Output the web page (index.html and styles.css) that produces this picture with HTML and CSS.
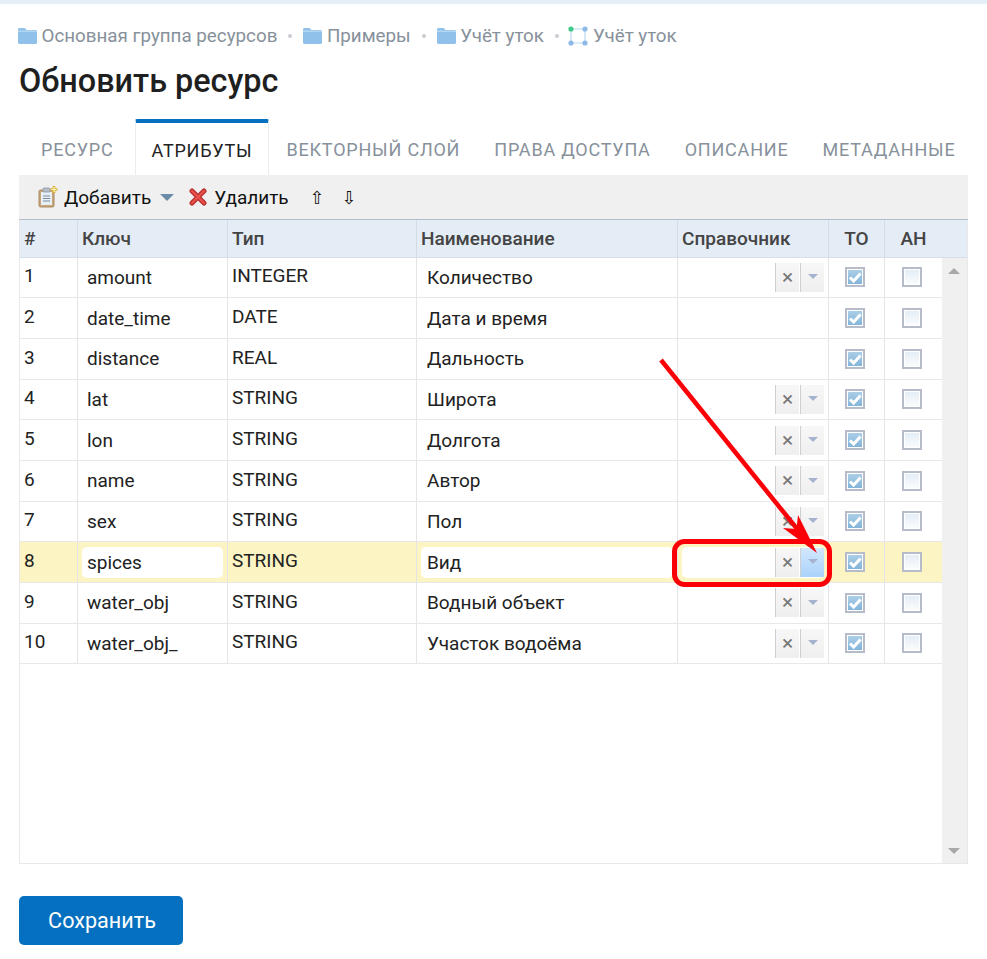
FILE: index.html
```html
<!DOCTYPE html>
<html lang="ru">
<head>
  <meta charset="UTF-8" />
  <meta name="viewport" content="width=device-width, initial-scale=1.0"/>
  <title>Обновить ресурс</title>
  <link rel="stylesheet" href="styles.css">
</head>
<body>

  <svg class="defs" width="0" height="0">
    <symbol id="folder" viewBox="0 0 19 16">
      <path d="M0 1.5C0 .7.6 0 1.4 0h4.8c.6 0 1 .3 1.3.8L8.4 2h9.2c.8 0 1.4.6 1.4 1.4v11.2c0 .8-.6 1.4-1.4 1.4H1.4C.6 16 0 15.4 0 14.6z" fill="#8fc1ea"/>
      <path d="M0 3.2h19" stroke="#c4e0f5" stroke-width="1"/>
    </symbol>
    <symbol id="check" viewBox="0 0 20 20">
      <path d="M5 10.5l3.6 3.6L15.5 6.5" fill="none" stroke="#fff" stroke-width="3"/>
    </symbol>
  </svg>

  <div class="topbar"></div>

  <div class="page">
    <nav class="crumbs">
      <svg class="crumb-icon"><use href="#folder"/></svg>
      <span>Основная группа ресурсов</span>
      <span class="dot"></span>
      <svg class="crumb-icon"><use href="#folder"/></svg>
      <span>Примеры</span>
      <span class="dot"></span>
      <svg class="crumb-icon"><use href="#folder"/></svg>
      <span>Учёт уток</span>
      <span class="dot dot-last"></span>
      <svg class="layer-icon" viewBox="0 0 20 20">
        <path d="M3 3h14v14H3z" fill="none" stroke="#bcd7f0" stroke-width="1.2"/>
        <circle cx="3" cy="3" r="2.6" fill="#3ecb8a"/>
        <circle cx="17" cy="3" r="2.6" fill="#8db9e6"/>
        <circle cx="3" cy="17" r="2.6" fill="#8db9e6"/>
        <circle cx="17" cy="17" r="2.6" fill="#8db9e6"/>
      </svg>
      <span>Учёт уток</span>
    </nav>

    <h1>Обновить ресурс</h1>

    <div class="tabs">
      <div class="tab">Ресурс</div>
      <div class="tab tab-active">Атрибуты</div>
      <div class="tab">Векторный слой</div>
      <div class="tab">Права доступа</div>
      <div class="tab">Описание</div>
      <div class="tab">Метаданные</div>
    </div>

    <div class="grid">
      <div class="toolbar">
        <svg class="tool-icon add-icon" viewBox="0 0 20 22">
          <rect x="1" y="4" width="15" height="17" rx="1.5" fill="#c9a77c" stroke="#a98a62"/>
          <rect x="3" y="6" width="11" height="13" fill="#e6eef6"/>
          <path d="M5 10h7M5 12.5h7M5 15h7" stroke="#7d8c9c" stroke-width="1.2"/>
          <rect x="5" y="2" width="7" height="4" rx="1" fill="#b6bec8" stroke="#8c96a2" stroke-width=".8"/>
          <path d="M16 0v7M12.5 3.5h7" stroke="#d9b13a" stroke-width="2.6"/>
          <path d="M16 1v5M13.5 3.5h5" stroke="#fff2a8" stroke-width="1.2"/>
        </svg>
        <span class="tool-label">Добавить</span>
        <span class="tool-caret"></span>
        <svg class="tool-icon del-icon" viewBox="0 0 18 18">
          <path d="M3 3l12 12M15 3L3 15" stroke="#b9302f" stroke-width="5" stroke-linecap="round"/>
          <path d="M3 3l12 12M15 3L3 15" stroke="#e8504a" stroke-width="2.4" stroke-linecap="round"/>
        </svg>
        <span class="tool-label">Удалить</span>
        <span class="tool-arrow tool-arrow-up">⇧</span>
        <span class="tool-arrow">⇩</span>
      </div>

      <div class="head">
        <div class="col-num">#</div>
        <div class="col-key">Ключ</div>
        <div class="col-type">Тип</div>
        <div class="col-name">Наименование</div>
        <div class="col-ref">Справочник</div>
        <div class="col-to">ТО</div>
        <div class="col-an">АН</div>
      </div>

      <div class="body">
        <div class="rows">
          <div class="row">
            <div class="col-num">1</div>
            <div class="col-key"><div class="field">amount</div></div>
            <div class="col-type">INTEGER</div>
            <div class="col-name"><div class="field">Количество</div></div>
            <div class="col-ref"><div class="field ref-field"><span class="ref-btn">×</span><span class="ref-btn ref-open"></span></div></div>
            <div class="col-to"><span class="box box-on"><svg><use href="#check"/></svg></span></div>
            <div class="col-an"><span class="box"></span></div>
          </div>
          <div class="row">
            <div class="col-num">2</div>
            <div class="col-key"><div class="field">date_time</div></div>
            <div class="col-type">DATE</div>
            <div class="col-name"><div class="field">Дата и время</div></div>
            <div class="col-ref"></div>
            <div class="col-to"><span class="box box-on"><svg><use href="#check"/></svg></span></div>
            <div class="col-an"><span class="box"></span></div>
          </div>
          <div class="row">
            <div class="col-num">3</div>
            <div class="col-key"><div class="field">distance</div></div>
            <div class="col-type">REAL</div>
            <div class="col-name"><div class="field">Дальность</div></div>
            <div class="col-ref"></div>
            <div class="col-to"><span class="box box-on"><svg><use href="#check"/></svg></span></div>
            <div class="col-an"><span class="box"></span></div>
          </div>
          <div class="row">
            <div class="col-num">4</div>
            <div class="col-key"><div class="field">lat</div></div>
            <div class="col-type">STRING</div>
            <div class="col-name"><div class="field">Широта</div></div>
            <div class="col-ref"><div class="field ref-field"><span class="ref-btn">×</span><span class="ref-btn ref-open"></span></div></div>
            <div class="col-to"><span class="box box-on"><svg><use href="#check"/></svg></span></div>
            <div class="col-an"><span class="box"></span></div>
          </div>
          <div class="row">
            <div class="col-num">5</div>
            <div class="col-key"><div class="field">lon</div></div>
            <div class="col-type">STRING</div>
            <div class="col-name"><div class="field">Долгота</div></div>
            <div class="col-ref"><div class="field ref-field"><span class="ref-btn">×</span><span class="ref-btn ref-open"></span></div></div>
            <div class="col-to"><span class="box box-on"><svg><use href="#check"/></svg></span></div>
            <div class="col-an"><span class="box"></span></div>
          </div>
          <div class="row">
            <div class="col-num">6</div>
            <div class="col-key"><div class="field">name</div></div>
            <div class="col-type">STRING</div>
            <div class="col-name"><div class="field">Автор</div></div>
            <div class="col-ref"><div class="field ref-field"><span class="ref-btn">×</span><span class="ref-btn ref-open"></span></div></div>
            <div class="col-to"><span class="box box-on"><svg><use href="#check"/></svg></span></div>
            <div class="col-an"><span class="box"></span></div>
          </div>
          <div class="row">
            <div class="col-num">7</div>
            <div class="col-key"><div class="field">sex</div></div>
            <div class="col-type">STRING</div>
            <div class="col-name"><div class="field">Пол</div></div>
            <div class="col-ref"><div class="field ref-field"><span class="ref-btn">×</span><span class="ref-btn ref-open"></span></div></div>
            <div class="col-to"><span class="box box-on"><svg><use href="#check"/></svg></span></div>
            <div class="col-an"><span class="box"></span></div>
          </div>
          <div class="row row-selected">
            <div class="col-num">8</div>
            <div class="col-key"><div class="field">spices</div></div>
            <div class="col-type">STRING</div>
            <div class="col-name"><div class="field">Вид</div></div>
            <div class="col-ref"><div class="field ref-field"><span class="ref-btn">×</span><span class="ref-btn ref-open ref-hover"></span></div></div>
            <div class="col-to"><span class="box box-on"><svg><use href="#check"/></svg></span></div>
            <div class="col-an"><span class="box"></span></div>
          </div>
          <div class="row">
            <div class="col-num">9</div>
            <div class="col-key"><div class="field">water_obj</div></div>
            <div class="col-type">STRING</div>
            <div class="col-name"><div class="field">Водный объект</div></div>
            <div class="col-ref"><div class="field ref-field"><span class="ref-btn">×</span><span class="ref-btn ref-open"></span></div></div>
            <div class="col-to"><span class="box box-on"><svg><use href="#check"/></svg></span></div>
            <div class="col-an"><span class="box"></span></div>
          </div>
          <div class="row">
            <div class="col-num">10</div>
            <div class="col-key"><div class="field">water_obj_</div></div>
            <div class="col-type">STRING</div>
            <div class="col-name"><div class="field">Участок водоёма</div></div>
            <div class="col-ref"><div class="field ref-field"><span class="ref-btn">×</span><span class="ref-btn ref-open"></span></div></div>
            <div class="col-to"><span class="box box-on"><svg><use href="#check"/></svg></span></div>
            <div class="col-an"><span class="box"></span></div>
          </div>
        </div>
        <div class="scrollbar">
          <span class="scroll-up"></span>
          <span class="scroll-down"></span>
        </div>
      </div>
    </div>

    <button class="save">Сохранить</button>
  </div>

  <!-- red marks drawn on top of the screenshot -->
  <svg class="marks" viewBox="0 0 987 959">
    <rect x="674.5" y="541.5" width="155" height="43" rx="10" fill="none" stroke="#fb0007" stroke-width="5"/>
    <path d="M661 360L802 535" stroke="#fb0007" stroke-width="4.5" fill="none"/>
    <path d="M817 553L783 528L796.500 529L798 515z" fill="#fb0007"/>
  </svg>

</body>
</html>
```

FILE: styles.css
```css
* {
  box-sizing: border-box;
}

body {
  font-family: Roboto, sans-serif;
  background: #fff;
  color: #1c1c1c;
  margin: 0;
  position: relative;
}

.defs {
  position: absolute;
}

.topbar {
  height: 4px;
  background: #e5eff7;
}

.page {
  padding: 0 19px;
}

/* breadcrumbs */
.crumbs {
  display: flex;
  align-items: center;
  height: 24px;
  margin-top: 20px;
  margin-left: -1px;
  font-size: 18.8px;
  color: #87919b;
}

.crumb-icon {
  width: 19px;
  height: 16px;
  margin-right: 4.5px;
  flex: none;
}

.layer-icon {
  width: 20px;
  height: 20px;
  margin-right: 5px;
  flex: none;
}

.dot {
  width: 4px;
  height: 4px;
  border-radius: 50%;
  background: #c9cdd2;
  margin: 0 11px;
}

.dot-last {
  margin-right: 9px;
}

h1 {
  font-size: 32.4px;
  font-weight: 500;
  line-height: 36px;
  color: #1f1f1f;
  margin: 15px 0 20px;
}

/* tabs */
.tabs {
  display: flex;
  height: 56px;
  padding-left: 5px;
  white-space: nowrap;
}

.tab {
  padding: 21px 17px 0;
  font-size: 18px;
  line-height: 20px;
  letter-spacing: 0.8px;
  text-transform: uppercase;
  color: #87919b;
}

.tab:first-child {
  margin-right: 4px;
}

.tab-active {
  color: #222;
  padding: 18px 16px 0;
  border: 1px solid #e8edf2;
  border-top: 4px solid #0670c0;
  border-bottom: none;
  border-radius: 2px 2px 0 0;
  background: #fff;
}

/* attribute grid */
.grid {
  border: 1px solid #e8e8e8;
  border-top: none;
  height: 689px;
}

.toolbar {
  display: flex;
  align-items: center;
  height: 45px;
  margin-left: -1px;
  margin-right: -1px;
  background: #f0f0f0;
  border-bottom: 1px solid #b3bbc6;
  font-size: 19px;
  color: #111;
  padding-left: 19px;
}

.tool-icon {
  flex: none;
}

.add-icon {
  width: 20px;
  height: 22px;
  margin-right: 6px;
}

.del-icon {
  width: 18px;
  height: 18px;
  margin-right: 7px;
}

.tool-caret {
  width: 0;
  height: 0;
  border-left: 7px solid transparent;
  border-right: 7px solid transparent;
  border-top: 7px solid #6c8ba9;
  margin: 0 15px 0 9px;
}

.tool-arrow {
  font-family: "DejaVu Sans", sans-serif;
  font-size: 18px;
  width: 14px;
  margin-left: 18px;
  text-align: center;
}

.tool-arrow-up {
  margin-left: 21px;
}

.head,
.row {
  display: grid;
  grid-template-columns: 58px 150px 189px 261px 151px 56px 57px;
}

.head {
  height: 37.67px;
  background: #e4ecf6;
  font-size: 19px;
  font-weight: 500;
  color: #444;
  border-bottom: 1px solid #d6dee8;
}

.head > div {
  display: flex;
  align-items: center;
  padding-left: 4px;
  border-right: 1px solid #d3dbe6;
}

.head .col-to,
.head .col-an {
  justify-content: center;
  padding-left: 0;
}

.head .col-an {
  border-right: none;
}

.body {
  display: flex;
  height: 605.33px;
}

.rows {
  flex: 1;
}

.row {
  height: 40.67px;
  border-bottom: 1px solid #e8e8e8;
  font-size: 19px;
  color: #222;
}

.row > div {
  display: flex;
  align-items: center;
  border-right: 1px solid #e4e4e4;
}

.row .col-an {
  border-right: none;
}

.row .col-num,
.row .col-type {
  padding: 0 0 3px 4px;
}

.row .col-to,
.row .col-an {
  justify-content: center;
  padding: 0 4px 0 0;
}

.row .col-key,
.row .col-name {
  padding: 0 4px;
}

.row .col-ref {
  padding: 0 4px;
}

.field {
  flex: 1;
  display: flex;
  align-items: center;
  height: 31px;
  padding-left: 5px;
  border-radius: 5px;
}

.col-name .field {
  padding-left: 6px;
}

.row-selected {
  background: #fcf5c3;
}

.row-selected .field {
  background: #fff;
}

.ref-field {
  justify-content: flex-end;
  gap: 1px;
  padding: 0;
}

.ref-btn {
  width: 24px;
  height: 29px;
  display: flex;
  align-items: center;
  justify-content: center;
  border-left: 1px solid #cfcfcf;
  background: linear-gradient(#f7f7f7, #efefef);
  font-size: 21px;
  color: #777;
  padding-bottom: 1px;
}

.ref-open::after {
  content: "";
  border-left: 5px solid transparent;
  border-right: 5px solid transparent;
  border-top: 5px solid #a6b3d0;
}

.ref-hover {
  background: linear-gradient(#d2e7fc, #aad2fb);
}

/* checkboxes */
.box {
  width: 20px;
  height: 20px;
  display: block;
  border: 2px solid #b6bcca;
  background: linear-gradient(#e3edf6, #fbfdfe);
  box-shadow: inset 0 0 0 1px #fff;
}

.box-on {
  background: linear-gradient(#aed0e8, #7fb2d8);
}

.box svg {
  display: block;
  width: 20px;
  height: 20px;
  margin: -2px;
}

/* fake scrollbar */
.scrollbar {
  width: 25px;
  background: #f0f0f0;
  position: relative;
}

.scroll-up,
.scroll-down {
  position: absolute;
  left: 6px;
  border-left: 6px solid transparent;
  border-right: 6px solid transparent;
}

.scroll-up {
  top: 10px;
  border-bottom: 6px solid #a8a8a8;
}

.scroll-down {
  bottom: 9px;
  border-top: 6px solid #a8a8a8;
}

.save {
  display: block;
  width: 164px;
  height: 49px;
  margin-top: 32px;
  padding-left: 8px;
  background: #0670c0;
  color: white;
  font-family: Roboto, sans-serif;
  font-size: 21.6px;
  border: none;
  border-radius: 5px;
  cursor: pointer;
}

.marks {
  position: absolute;
  left: 0;
  top: 0;
  width: 987px;
  height: 959px;
  pointer-events: none;
}
```
